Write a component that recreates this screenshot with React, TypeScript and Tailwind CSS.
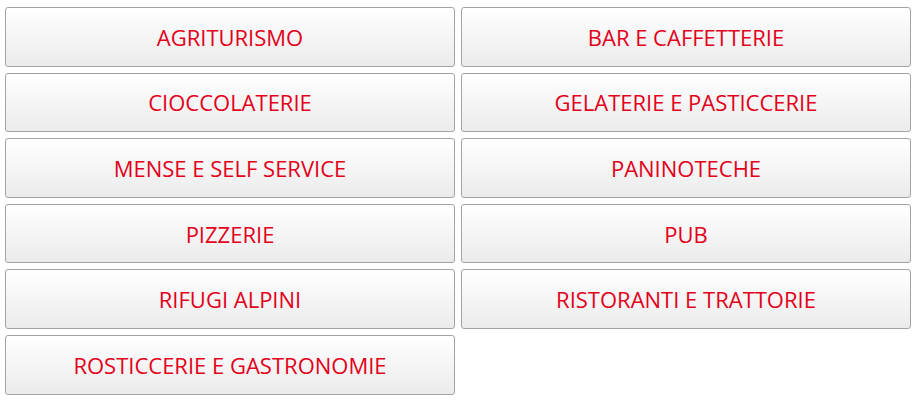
import React from "react";

const items = [
  "AGRITURISMO",
  "BAR E CAFFETTERIE",
  "CIOCCOLATERIE",
  "GELATERIE E PASTICCERIE",
  "MENSE E SELF SERVICE",
  "PANINOTECHE",
  "PIZZERIE",
  "PUB",
  "RIFUGI ALPINI",
  "RISTORANTI E TRATTORIE",
  "ROSTICCERIE E GASTRONOMIE",
];

export default function App() {
  return (
    <div className="w-[919px] h-[401px] bg-white pt-[7px] pl-[5px]" style={{ fontFamily: '"Open Sans", sans-serif' }}>
      <div className="grid grid-cols-[450px_450px] gap-x-[6px] gap-y-[6px]">
        {items.map((t) => (
          <div
            key={t}
            className="h-[59.6px] flex items-center justify-center rounded-[3px] border border-[#a3a3a3] bg-gradient-to-b from-[#ffffff] to-[#ebebeb] text-[#e2001a] text-[22px] leading-none"
          >
            {t}
          </div>
        ))}
      </div>
    </div>
  );
}
